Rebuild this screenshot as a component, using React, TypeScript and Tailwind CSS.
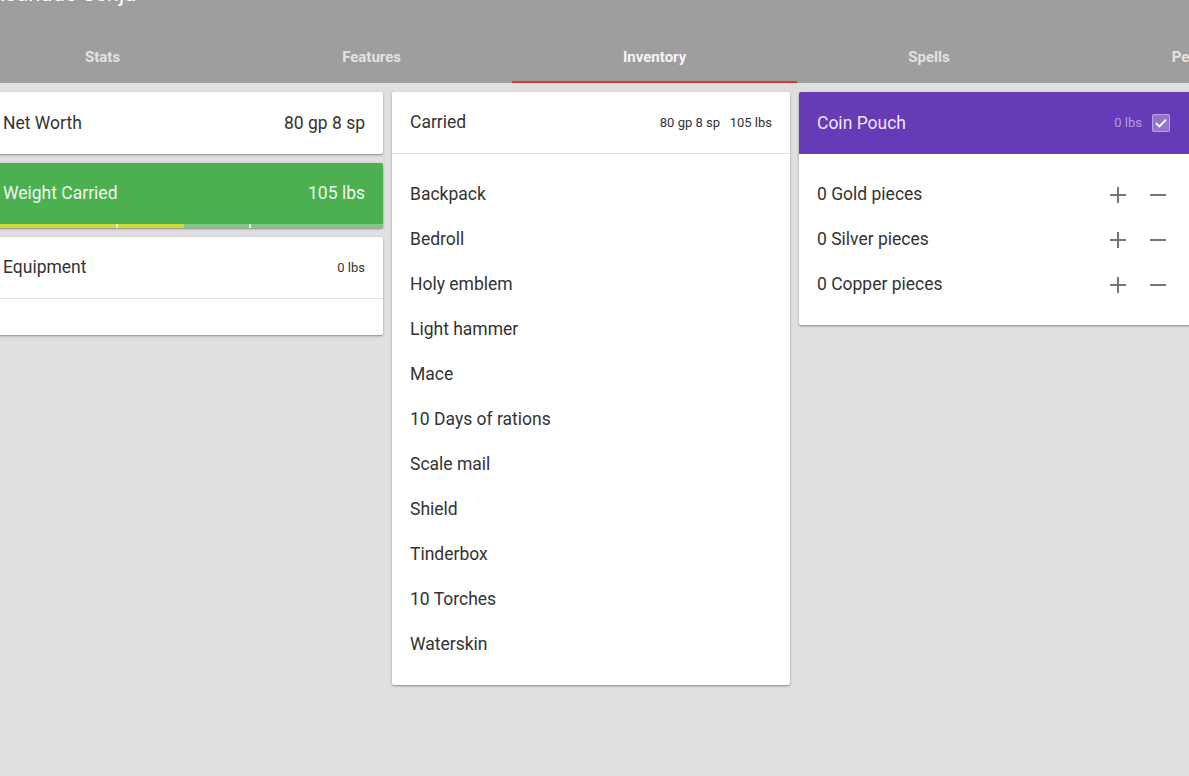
import React from "react";

const tabs = ["Stats", "Features", "Inventory", "Spells", "Personality"];
const items = [
  "Backpack",
  "Bedroll",
  "Holy emblem",
  "Light hammer",
  "Mace",
  "10 Days of rations",
  "Scale mail",
  "Shield",
  "Tinderbox",
  "10 Torches",
  "Waterskin",
];
const coins = ["0 Gold pieces", "0 Silver pieces", "0 Copper pieces"];

function PlusIcon() {
  return (
    <svg width="16" height="16" viewBox="0 0 16 16" className="shrink-0">
      <rect x="7" y="0" width="2" height="16" fill="#757575" />
      <rect x="0" y="7" width="16" height="2" fill="#757575" />
    </svg>
  );
}

function MinusIcon() {
  return (
    <svg width="16" height="16" viewBox="0 0 16 16" className="shrink-0">
      <rect x="0" y="7" width="16" height="2" fill="#757575" />
    </svg>
  );
}

const card = "bg-white rounded-[2px] shadow-[0_1px_3px_rgba(0,0,0,0.28),0_1px_1px_rgba(0,0,0,0.14)]";

export default function App() {
  return (
    <div
      className="min-h-[776px] w-[1189px] overflow-hidden bg-[#e0e0e0]"
      style={{ fontFamily: "Roboto, 'Noto Sans', sans-serif" }}
    >
      <div className="bg-[#9e9e9e] h-[83px] overflow-hidden flow-root">
        <div className="h-[33px] overflow-hidden">
          <div className="relative -top-[17px] -ml-[9px] text-[22px] leading-[22px] text-white whitespace-nowrap">
            Reanude Senju
          </div>
        </div>
        <div className="flex -ml-[26px] h-[50px]">
          {tabs.map((t) => (
            <div
              key={t}
              className={`relative shrink-0 px-[111px] h-[50px] flex items-center justify-center pb-[2px] text-[15px] font-bold whitespace-nowrap ${
                t === "Inventory" ? "text-[#f5f5f5]" : "text-[#e2e2e2]"
              }`}
            >
              {t}
              {t === "Inventory" && (
                <div className="absolute left-0 right-0 bottom-0 h-[2px] bg-[#d9392b]" />
              )}
            </div>
          ))}
        </div>
      </div>

      <div className="flex items-start gap-[9px] -ml-[15px] mt-[9px]">
        {/* Left column */}
        <div className="w-[398px] shrink-0 flex flex-col gap-[9px]">
          <div className={`${card} h-[62px] px-[18px] flex items-center justify-between text-[17.5px] text-[#333]`}>
            <span>Net Worth</span>
            <span>80 gp 8 sp</span>
          </div>
          <div className="rounded-[2px] overflow-hidden bg-[#4caf50] shadow-[0_1px_3px_rgba(0,0,0,0.28),0_1px_1px_rgba(0,0,0,0.14)]">
            <div className="h-[61px] px-[18px] flex items-center justify-between text-[17.5px] text-[#eef7ee]">
              <span>Weight Carried</span>
              <span>105 lbs</span>
            </div>
            <div className="relative h-[4px] bg-[#81c784]">
              <div className="absolute left-0 top-0 h-[4px] w-1/2 bg-[#cddc39]" />
              <div className="absolute top-0 h-[4px] w-[2px] left-[131px] bg-[#f0f4c3]" />
              <div className="absolute top-0 h-[4px] w-[2px] left-[264px] bg-[#e8f5e9]" />
            </div>
          </div>
          <div className={`${card}`}>
            <div className="h-[62px] px-[18px] flex items-center justify-between border-b border-[#e0e0e0]">
              <span className="text-[17.5px] text-[#333]">Equipment</span>
              <span className="text-[13px] text-[#333]">0 lbs</span>
            </div>
            <div className="h-[36px]" />
          </div>
        </div>

        {/* Middle column */}
        <div className={`${card} w-[398px] shrink-0`}>
          <div className="h-[62px] px-[18px] flex items-center justify-between border-b border-[#e0e0e0]">
            <span className="text-[17.5px] text-[#333]">Carried</span>
            <span className="text-[13px] text-[#333] whitespace-pre">80 gp 8 sp   105 lbs</span>
          </div>
          <div className="py-[18px]">
            {items.map((it) => (
              <div key={it} className="h-[45px] px-[18px] flex items-center text-[17.5px] text-[#333]">
                {it}
              </div>
            ))}
          </div>
        </div>

        {/* Right column */}
        <div className={`${card} w-[398px] shrink-0 overflow-hidden`}>
          <div className="h-[62px] bg-[#673ab7] pl-[18px] pr-[27px] flex items-center justify-between">
            <span className="text-[17.5px] text-[#ece6f6]">Coin Pouch</span>
            <div className="flex items-center gap-[10px]">
              <span className="text-[13px] text-[#b39ddb]">0 lbs</span>
              <div className="w-[18px] h-[18px] rounded-[2px] bg-[rgba(255,255,255,0.3)] border border-[rgba(255,255,255,0.35)] flex items-center justify-center">
                <svg width="14" height="14" viewBox="0 0 14 14">
                  <path d="M2 7.2 L5.4 10.4 L12 3.6" stroke="white" strokeWidth="1.8" fill="none" />
                </svg>
              </div>
            </div>
          </div>
          <div className="py-[18px]">
            {coins.map((c) => (
              <div key={c} className="h-[45px] pl-[18px] pr-[31px] flex items-center justify-between text-[17.5px] text-[#333]">
                <span>{c}</span>
                <div className="flex items-center gap-[24px]">
                  <PlusIcon />
                  <MinusIcon />
                </div>
              </div>
            ))}
          </div>
        </div>
      </div>
    </div>
  );
}
